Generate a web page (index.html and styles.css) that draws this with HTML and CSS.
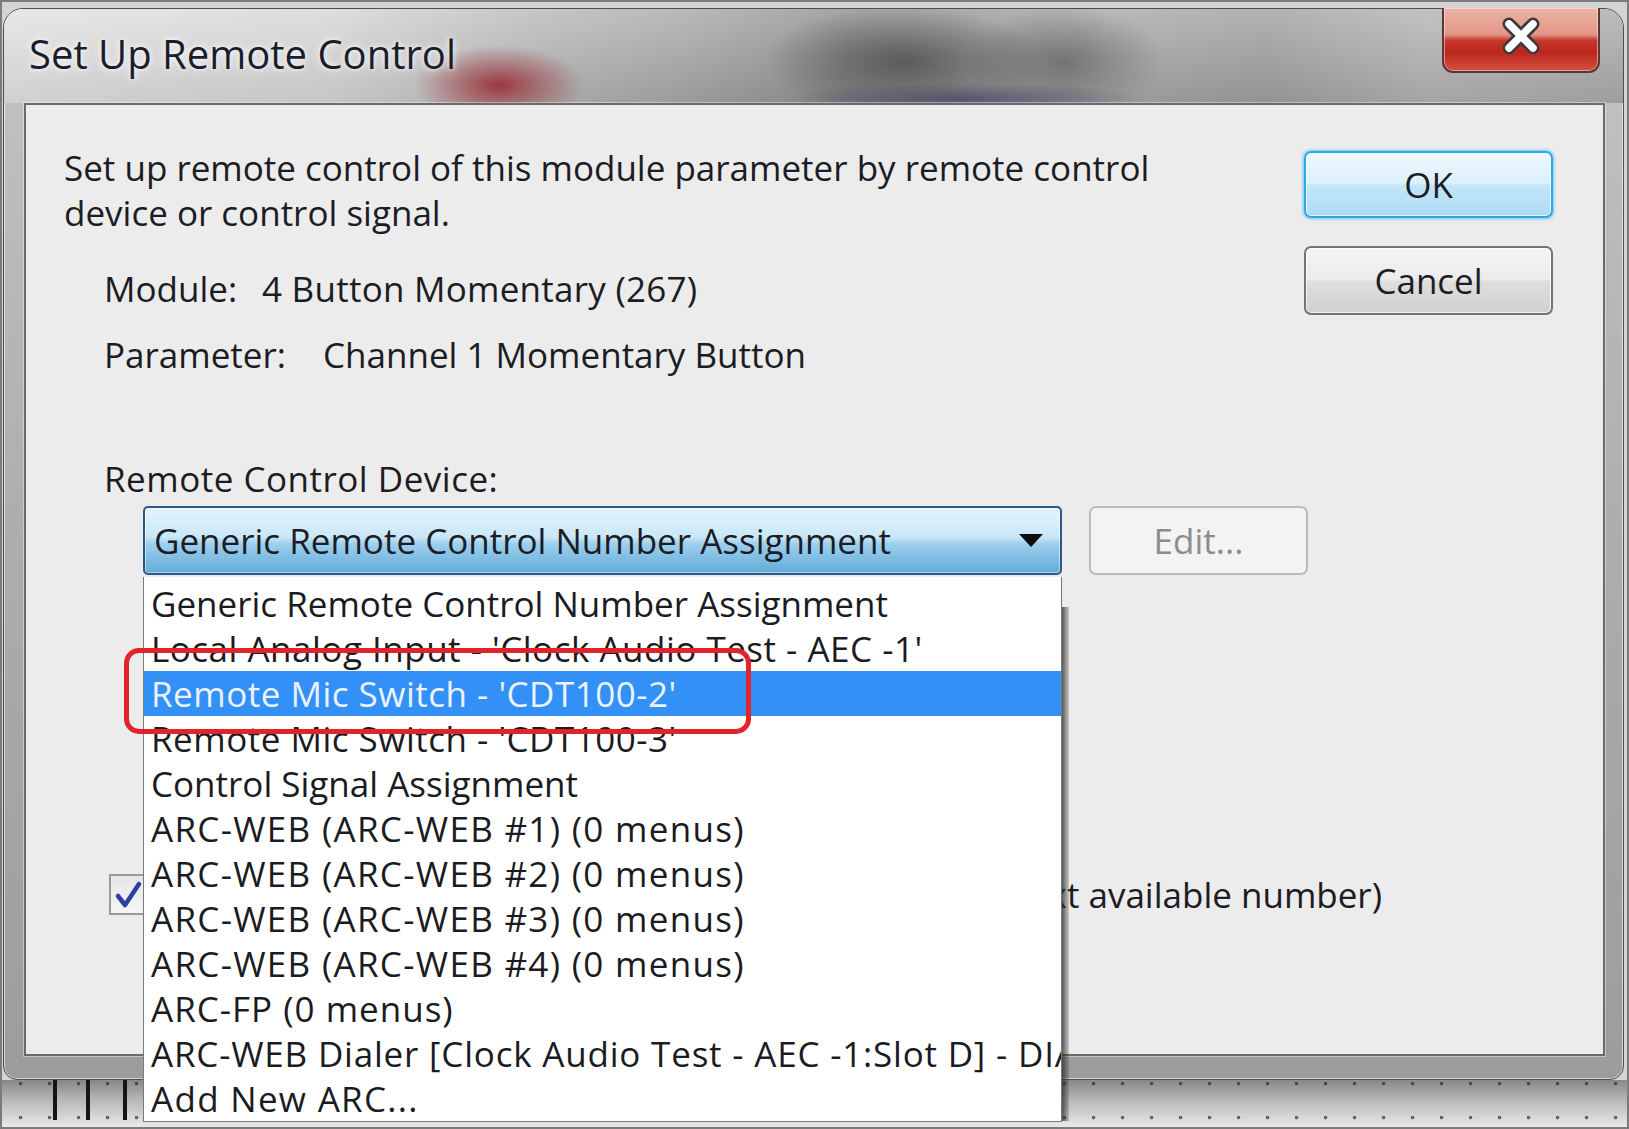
FILE: index.html
```html
<!DOCTYPE html>
<html lang="en">
<head>
<meta charset="utf-8">
<title>Set Up Remote Control</title>
<link rel="stylesheet" href="styles.css">
</head>
<body>
<div class="screen">
  <div class="window">
    <div class="titlebar">
      <div class="title">Set Up Remote Control</div>
      <div class="close-btn">
        <svg width="42" height="38" viewBox="0 0 42 38">
          <path d="M9 7 L33 31 M33 7 L9 31" stroke="#3b3b3b" stroke-width="13" stroke-linecap="round" fill="none"/>
          <path d="M9 7 L33 31 M33 7 L9 31" stroke="#ffffff" stroke-width="7.5" stroke-linecap="round" fill="none"/>
        </svg>
      </div>
    </div>
    <div class="client">
      <div class="top-row">
        <div class="info">
          <div class="desc">Set up remote control of this module parameter by remote control<br>device or control signal.</div>
          <div class="field module-row"><span class="lbl lbl-module">Module:</span><span>4 Button Momentary (267)</span></div>
          <div class="field param-row"><span class="lbl lbl-param">Parameter:</span><span>Channel 1 Momentary Button</span></div>
        </div>
        <div class="buttons">
          <div class="btn btn-ok">OK</div>
          <div class="btn btn-cancel">Cancel</div>
        </div>
      </div>
      <div class="field device-label">Remote Control Device:</div>
      <div class="combo-row">
        <div class="combo-wrap">
          <div class="combo">
            <span class="combo-text">Generic Remote Control Number Assignment</span>
            <svg class="combo-arrow" width="24" height="13" viewBox="0 0 24 13"><path d="M0 0 H24 L12 13 Z" fill="#0d0d0d"/></svg>
          </div>
          <div class="list">
            <div class="item">Generic Remote Control Number Assignment</div>
            <div class="item sp-s">Local Analog Input - 'Clock Audio Test - AEC -1'</div>
            <div class="item selected sp-s">Remote Mic Switch - 'CDT100-2'</div>
            <div class="item sp-s">Remote Mic Switch - 'CDT100-3'</div>
            <div class="item">Control Signal Assignment</div>
            <div class="item sp-l">ARC-WEB (ARC-WEB #1) (0 menus)</div>
            <div class="item sp-l">ARC-WEB (ARC-WEB #2) (0 menus)</div>
            <div class="item sp-l">ARC-WEB (ARC-WEB #3) (0 menus)</div>
            <div class="item sp-l">ARC-WEB (ARC-WEB #4) (0 menus)</div>
            <div class="item sp-m">ARC-FP (0 menus)</div>
            <div class="item clip sp-d">ARC-WEB Dialer [Clock Audio Test - AEC -1:Slot D] - DIALER 1</div>
            <div class="item sp-l">Add New ARC...</div>
            <div class="highlight"></div>
          </div>
        </div>
        <div class="btn btn-edit">Edit...</div>
      </div>
      <div class="chk-row">
        <span class="chk">
          <svg width="30" height="30" viewBox="0 0 30 30"><path d="M5 16 L12 25 L26 4" stroke="#2d3f9e" stroke-width="4.5" fill="none" stroke-linecap="round" stroke-linejoin="round"/></svg>
        </span>
        <span class="chk-clip"><span class="chk-label">Automatically assign remote control number (next available number)</span></span>
      </div>
    </div>
  </div>
  <div class="strip">
    <span class="vline"></span>
    <span class="vline"></span>
    <span class="vline"></span>
  </div>
</div>
</body>
</html>
```
FILE: styles.css
```css
* { box-sizing: border-box; }
html, body { margin: 0; padding: 0; }
body {
  width: 1629px;
  height: 1129px;
  overflow: hidden;
  font-family: "Open Sans", "Noto Sans", sans-serif;
  color: #1c1c24;
}
.screen {
  width: 1629px;
  height: 1129px;
  border: 2px solid #7b7b7b;
  background: #d4d4d4;
  display: flex;
  flex-direction: column;
  overflow: hidden;
}
.window {
  margin: 6px 0 0 1px;
  width: 1621px;
  height: 1072px;
  flex: none;
  border: 1px solid #4e4e4e;
  border-radius: 20px 20px 14px 14px;
  background: linear-gradient(to bottom, #c4c4c4 0%, #adadad 50%, #9c9c9c 100%);
  box-shadow: inset 0 0 0 1px rgba(255,255,255,0.55);
  display: flex;
  flex-direction: column;
}
.titlebar {
  height: 94px;
  flex: none;
  display: flex;
  align-items: flex-start;
  border-radius: 19px 19px 0 0;
  background:
    radial-gradient(ellipse 85px 40px at 495px 76px, rgba(150,36,44,0.85), rgba(150,36,44,0) 100%),
    radial-gradient(ellipse 140px 55px at 900px 52px, rgba(65,65,65,0.7), rgba(65,65,65,0) 100%),
    radial-gradient(ellipse 100px 55px at 1060px 52px, rgba(75,75,75,0.55), rgba(75,75,75,0) 100%),
    radial-gradient(ellipse 180px 16px at 960px 90px, rgba(70,70,110,0.75), rgba(70,70,110,0) 100%),
    linear-gradient(to bottom, rgba(255,255,255,0.2), rgba(0,0,0,0.08)),
    linear-gradient(to right, #e2e2e2 0%, #d6d6d6 20%, #b8b8b8 33%, #a8a8a8 42%, #8f8f8f 52%, #999999 60%, #a9a9a9 68%, #9f9f9f 78%, #b3b3b3 88%, #ababab 100%);
}
.title {
  margin-top: 21px;
  padding-left: 25px;
  font-size: 40px;
  font-stretch: 88%;
  font-weight: 500;
  line-height: 48px;
  color: #1a1e2c;
  white-space: nowrap;
  text-shadow: 0 0 10px rgba(255,255,255,0.9), 0 0 4px rgba(255,255,255,0.8);
}
.close-btn {
  margin-left: auto;
  margin-right: 23px;
  margin-top: -1px;
  width: 158px;
  height: 65px;
  border: 2px solid #5b3632;
  border-top: none;
  border-radius: 0 0 11px 11px;
  background: linear-gradient(to bottom, #eab3a6 0%, #e39685 42%, #c7352a 52%, #bb261d 70%, #d4503f 100%);
  box-shadow: inset 0 0 0 1px rgba(255,255,255,0.45);
  display: flex;
  align-items: center;
  justify-content: center;
  padding-bottom: 8px;
}
.client {
  margin: 0 18px 0 20px;
  height: 953px;
  flex: none;
  border: 2px solid #6a6a6a;
  background: #ececec;
  padding: 40px 50px 0 38px;
  box-shadow: 0 0 0 1px rgba(255,255,255,0.4);
}
.top-row {
  display: flex;
  justify-content: space-between;
  align-items: flex-start;
}
.desc, .field, .item, .chk-label, .btn, .combo-text {
  font-size: 35px;
  font-stretch: 88%;
  font-weight: 500;
  white-space: nowrap;
}
.desc { line-height: 45px; }
.field { line-height: 45px; display: flex; }
.module-row { margin-top: 31px; margin-left: 40px; }
.param-row { margin-top: 21px; margin-left: 40px; }
.lbl-module { width: 158px; flex: none; }
.lbl-param { width: 219px; flex: none; }
.module-row span + span { letter-spacing: 0.25px; }
.buttons {
  margin-top: 6px;
  display: flex;
  flex-direction: column;
  gap: 28px;
}
.btn {
  display: flex;
  align-items: center;
  justify-content: center;
  border-radius: 7px;
  line-height: 1;
}
.btn-ok {
  width: 249px;
  height: 67px;
  border: 2px solid #2fa6e6;
  background: linear-gradient(to bottom, #eef8fe 0%, #dcf1fc 48%, #c3e6fa 52%, #aedbf4 100%);
  box-shadow: 0 0 3px 1px rgba(70,190,245,0.8), inset 0 0 0 1px rgba(255,255,255,0.7);
}
.btn-cancel {
  width: 249px;
  height: 69px;
  border: 2px solid #747474;
  background: linear-gradient(to bottom, #f4f4f4 0%, #ececec 48%, #dedede 52%, #d0d0d0 100%);
  box-shadow: inset 0 0 0 1px rgba(255,255,255,0.7);
}
.device-label {
  margin-top: 79px;
  margin-left: 40px;
  letter-spacing: 0.5px;
}
.combo-row {
  margin-top: 5px;
  margin-left: 79px;
  display: flex;
  gap: 27px;
}
.combo-wrap {
  position: relative;
  width: 919px;
  height: 69px;
}
.combo {
  height: 69px;
  border: 2px solid #2c5a82;
  border-radius: 5px;
  background: linear-gradient(to bottom, #e4f3fc 0%, #c9e7f7 45%, #9dd0ee 55%, #63aad8 100%);
  box-shadow: inset 0 0 0 1px rgba(255,255,255,0.45);
  display: flex;
  align-items: center;
  padding: 0 17px 0 9px;
}
.combo-text { flex: 1; }
.combo-arrow { flex: none; }
.list {
  position: absolute;
  left: 0;
  top: 71px;
  width: 919px;
  height: 545px;
  background: #ffffff;
  border: 1px solid #7a7a7a;
  border-top: none;
  padding: 4px 0 0 0;
  z-index: 10;
}
.list::after {
  content: "";
  position: absolute;
  right: -8px;
  top: 30px;
  bottom: 0;
  width: 7px;
  background: linear-gradient(to right, rgba(40,40,40,0.75), rgba(80,80,80,0.25));
}
.item {
  height: 45px;
  line-height: 45px;
  padding-left: 7px;
  color: #1b1b22;
}
.item.sp-s { letter-spacing: 0.5px; }
.item.sp-m { letter-spacing: 1px; }
.item.sp-l { letter-spacing: 1.3px; }
.item.sp-d { letter-spacing: 0.8px; }
.item.clip { overflow: hidden; }
.item.selected {
  background: #3390f7;
  color: #eaf3ff;
}
.highlight {
  position: absolute;
  left: -20px;
  top: 71px;
  width: 627px;
  height: 86px;
  border: 5px solid #e1232b;
  border-radius: 15px;
}
.btn-edit {
  width: 219px;
  height: 69px;
  border: 2px solid #b8bcbf;
  background: #f3f3f3;
  color: #8c8c8c;
}
.chk-row {
  margin-top: 297px;
  margin-left: 45px;
  width: 1273px;
  height: 45px;
  display: flex;
  align-items: center;
}
.chk {
  width: 37px;
  height: 41px;
  flex: none;
  border: 2px solid #9a9a9a;
  background: linear-gradient(to bottom, #e6e6e6, #f6f6f6);
  display: flex;
  align-items: center;
  justify-content: center;
}
.chk-clip {
  flex: 1;
  display: flex;
  justify-content: flex-end;
  overflow: hidden;
}
.chk-label { line-height: 45px; }
.strip {
  flex: 1;
  display: flex;
  background:
    radial-gradient(circle at 1.5px 1.5px, #4a4a4a 1.5px, rgba(0,0,0,0) 2.2px) 1090px 2px / 29px 34px repeat-x,
    radial-gradient(circle at 1.5px 1.5px, #666 1.5px, rgba(0,0,0,0) 2.2px) 1090px 36px / 29px 34px repeat-x,
    linear-gradient(to bottom, #878787 0%, #b5b5b5 40%, #e9e9e9 100%);
}
.vline {
  width: 4px;
  height: 40px;
  background: #151515;
  margin-left: 51px;
}
.vline + .vline { margin-left: 29px; }
.vline + .vline + .vline { margin-left: 33px; }
```
